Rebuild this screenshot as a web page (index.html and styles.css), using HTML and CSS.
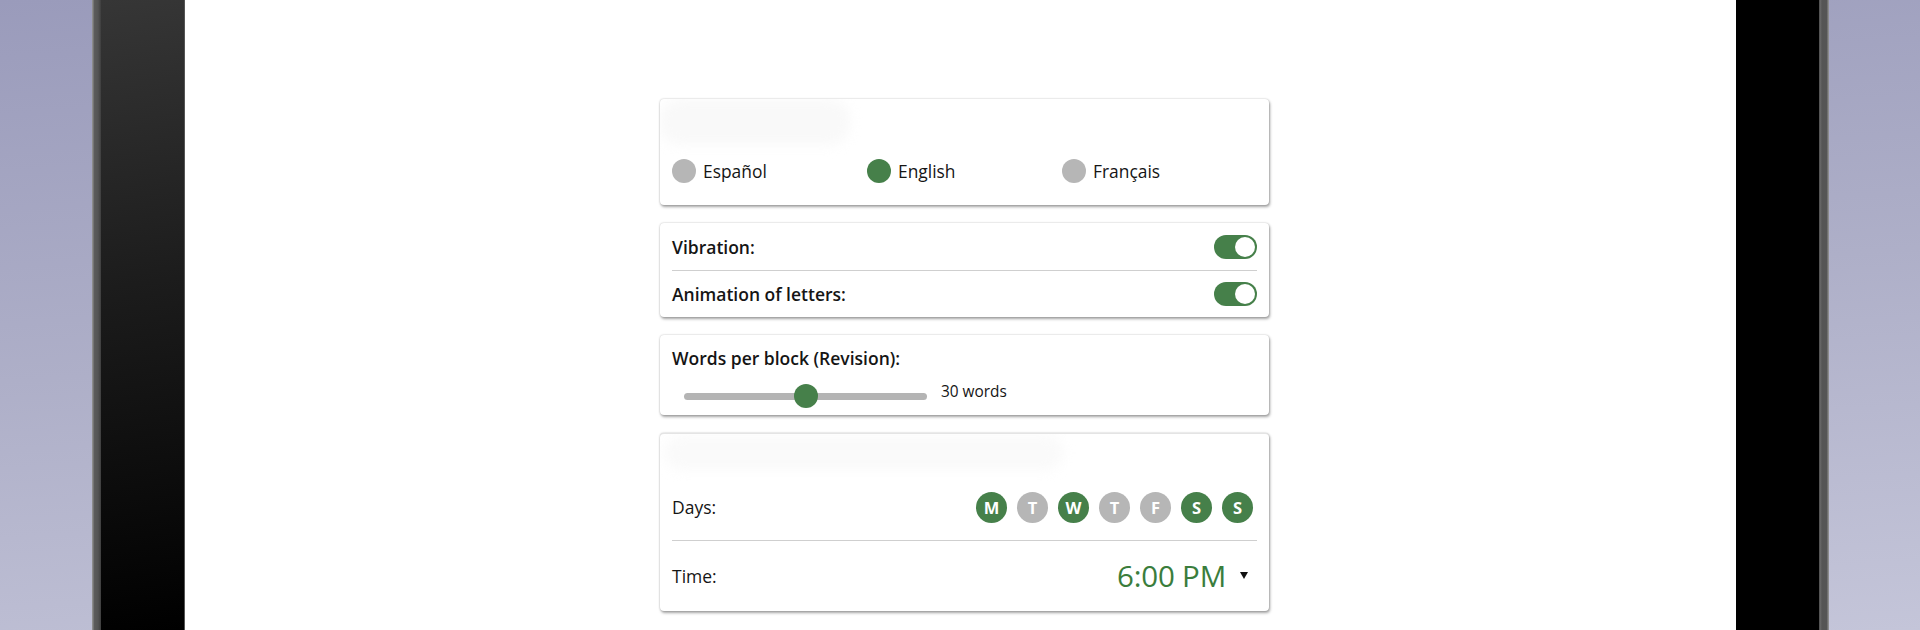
FILE: index.html
```html
<!DOCTYPE html>
<html lang="en">
<head>
<meta charset="utf-8">
<title>Settings</title>
<link rel="stylesheet" href="styles.css">
</head>
<body>
<div class="device">
  <div class="rim rim-left"></div>
  <div class="bezel bezel-left"></div>
  <main class="screen">
    <div class="cards">
      <section class="card card-lang">
        <div class="ghost ghost-lang"></div>
        <div class="radios">
          <label class="radio"><span class="dot"></span><span class="radio-text">Español</span></label>
          <label class="radio"><span class="dot on"></span><span class="radio-text">English</span></label>
          <label class="radio"><span class="dot"></span><span class="radio-text">Français</span></label>
        </div>
      </section>

      <section class="card card-toggles">
        <div class="row row-first">
          <span class="label strong">Vibration:</span>
          <span class="toggle"><span class="knob"></span></span>
        </div>
        <div class="divider"></div>
        <div class="row row-second">
          <span class="label strong">Animation of letters:</span>
          <span class="toggle"><span class="knob"></span></span>
        </div>
      </section>

      <section class="card card-slider">
        <div class="label strong">Words per block (Revision):</div>
        <div class="slider-row">
          <div class="track"><span class="thumb"></span></div>
          <span class="slider-value">30 words</span>
        </div>
      </section>

      <section class="card card-reminder">
        <div class="ghost ghost-reminder"></div>
        <div class="days-row">
          <span class="label">Days:</span>
          <div class="days">
            <span class="day on">M</span>
            <span class="day">T</span>
            <span class="day on">W</span>
            <span class="day">T</span>
            <span class="day">F</span>
            <span class="day on">S</span>
            <span class="day on">S</span>
          </div>
        </div>
        <div class="divider"></div>
        <div class="time-row">
          <span class="label">Time:</span>
          <span class="time-pick"><span class="time">6:00 PM</span><span class="caret"></span></span>
        </div>
      </section>
    </div>
  </main>
  <div class="bezel bezel-right"></div>
  <div class="rim rim-right"></div>
</div>
</body>
</html>
```

FILE: styles.css
```css
* { box-sizing: border-box; }

html, body {
  margin: 0;
  padding: 0;
  height: 630px;
  overflow: hidden;
}

body {
  background: linear-gradient(176deg, #9a9bbb 0%, #aeafc8 50%, #c4c5d9 100%);
  font-family: "Open Sans", "Noto Sans", sans-serif;
  color: #151515;
}

.device {
  display: flex;
  margin-left: 92px;
  width: 1737px;
  height: 630px;
}

.rim {
  height: 100%;
}
.rim-left {
  width: 9px;
  background: linear-gradient(90deg, #8c8c8c 0, #8c8c8c 1px, #5c5c5c 2px, #545454 6px, #3e3e3e 9px);
}
.rim-right {
  width: 10px;
  background: linear-gradient(90deg, #3e3e3e 0, #6a6a6a 1px, #555 3px, #555 8px, #8c8c8c 9px, #8c8c8c 10px);
}

.bezel { height: 100%; }
.bezel-left {
  width: 84px;
  background: linear-gradient(172deg, #363636 0%, #1c1c1c 45%, #000 100%);
  border-right: 1px solid #555;
}
.bezel-right {
  width: 83px;
  background: #000;
}

.screen {
  width: 1551px;
  height: 100%;
  background: #fff;
  padding-top: 99px;
  padding-left: 475px;
}

.cards {
  width: 609px;
  display: flex;
  flex-direction: column;
  gap: 18px;
}

.card {
  background: #fff;
  border-radius: 4px;
  overflow: hidden;
  box-shadow: 0 0 2px rgba(0, 0, 0, 0.25), 1px 2px 3px rgba(0, 0, 0, 0.35);
}

.label {
  font-size: 17.5px;
  line-height: 24px;
  color: #151515;
}
.strong { font-weight: 600; }

.ghost {
  border-radius: 20px;
  filter: blur(6px);
}

/* language card */
.card-lang {
  height: 106px;
  padding: 0 12px 22px;
}
.ghost-lang {
  height: 46px;
  margin: 0 0 14px -12px;
  width: 190px;
  background: #f9f9f9;
}
.radios {
  display: grid;
  grid-template-columns: repeat(3, 1fr);
}
.radio {
  display: flex;
  align-items: center;
  gap: 7px;
  height: 24px;
}
.dot {
  width: 24px;
  height: 24px;
  border-radius: 50%;
  background: #b6b6b6;
  flex: none;
}
.dot.on { background: #46804a; }
.radio-text {
  font-size: 17.4px;
  color: #151515;
}

/* toggle card */
.card-toggles {
  height: 94px;
}
.row {
  display: flex;
  align-items: center;
  justify-content: space-between;
  padding: 0 12px;
}
.row-first { height: 47px; }
.row-second { height: 46px; }
.divider {
  height: 1px;
  margin: 0 12px;
  background: #cfcfcf;
}
.toggle {
  width: 43px;
  height: 24px;
  border-radius: 12px;
  background: #46804a;
  display: flex;
  align-items: center;
  justify-content: flex-end;
  padding-right: 2px;
}
.knob {
  width: 20px;
  height: 20px;
  border-radius: 50%;
  background: #fff;
}

/* slider card */
.card-slider {
  height: 80px;
  padding: 11px 12px 0;
}
.slider-row {
  display: flex;
  align-items: center;
  height: 24px;
  margin-top: 14px;
  padding-left: 12px;
}
.track {
  width: 243px;
  height: 7px;
  border-radius: 4px;
  background: #b4b4b4;
  display: flex;
  align-items: center;
  padding-left: 110px;
}
.thumb {
  width: 24px;
  height: 24px;
  border-radius: 50%;
  background: #46804a;
  flex: none;
}
.slider-value {
  margin-left: 14px;
  margin-bottom: 10px;
  font-size: 15.4px;
  color: #151515;
}

/* reminder card */
.card-reminder {
  height: 178px;
  border-top: 1px solid #e4e4e4;
}
.ghost-reminder {
  height: 34px;
  width: 400px;
  margin: 2px 0 4px 4px;
  background: #fafafa;
}
.days-row {
  height: 66px;
  display: flex;
  align-items: center;
  justify-content: space-between;
  padding: 0 16px 0 12px;
}
.days {
  display: flex;
  gap: 10px;
}
.day {
  width: 31px;
  height: 31px;
  border-radius: 50%;
  background: #b6b6b6;
  color: #fff;
  font-weight: 700;
  font-size: 16.5px;
  display: flex;
  align-items: center;
  justify-content: center;
}
.day.on { background: #46804a; }

.time-row {
  height: 69px;
  display: flex;
  align-items: center;
  justify-content: space-between;
  padding: 0 21px 0 12px;
}
.time-pick {
  display: flex;
  align-items: center;
  gap: 14px;
}
.time {
  font-size: 29.5px;
  color: #3a7d3c;
  letter-spacing: -0.2px;
}
.caret {
  width: 0;
  height: 0;
  border-left: 4px solid transparent;
  border-right: 4px solid transparent;
  border-top: 7px solid #111;
}
```
